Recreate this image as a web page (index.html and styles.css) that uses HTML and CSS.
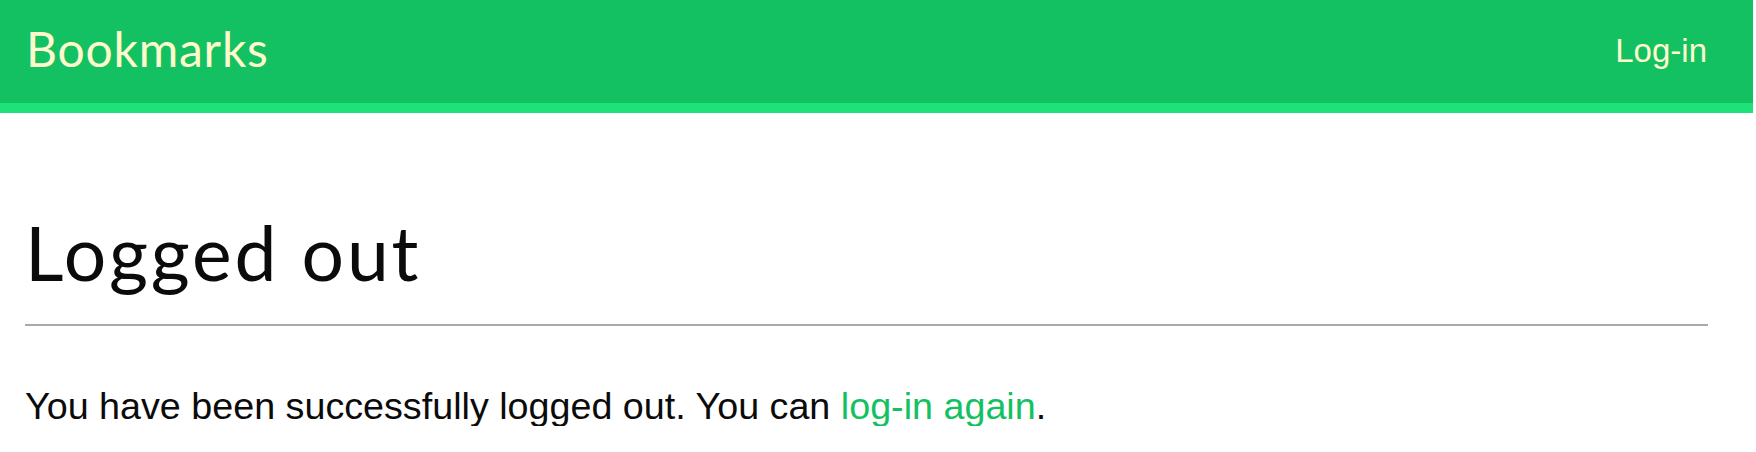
FILE: index.html
```html
<!DOCTYPE html>
<html lang="en">
<head>
<meta charset="utf-8">
<title>Logged out</title>
<link rel="stylesheet" href="styles.css">
</head>
<body>
<header class="site-header">
  <span class="logo">Bookmarks</span>
  <a class="login-link" href="#">Log-in</a>
</header>
<main class="content">
  <h1 class="title">Logged out</h1>
  <hr class="divider">
  <p class="message">You have been successfully logged out. You can <a class="inline-link" href="#">log-in again</a>.</p>
</main>
</body>
</html>
```
FILE: styles.css
```css
html, body {
  margin: 0;
  padding: 0;
  background: #ffffff;
}
body {
  margin-right: 3px;
  font-family: "Liberation Sans", Arial, sans-serif;
  color: #0b0b0b;
}
.site-header {
  height: 103px;
  background: #13c163;
  border-bottom: 10px solid #1de27a;
  display: flex;
  justify-content: space-between;
  align-items: flex-start;
  padding: 0 46px 0 26px;
}
.logo {
  font-family: "Lato", sans-serif;
  font-size: 48px;
  letter-spacing: 0.8px;
  line-height: 1;
  margin-top: 25px;
  color: #fdf9cc;
}
.login-link {
  font-family: "Liberation Sans", Arial, sans-serif;
  font-size: 33px;
  line-height: 1;
  margin-top: 34px;
  color: #fdf9cc;
  text-decoration: none;
}
.content {
  padding: 0 45px 0 25px;
}
.title {
  font-family: "Lato", sans-serif;
  font-weight: normal;
  font-size: 75px;
  letter-spacing: 2.9px;
  line-height: 1;
  margin: 102px 0 0 0;
  color: #0b0b0b;
}
.divider {
  border: 0;
  height: 2px;
  background: #a9a9a9;
  margin: 34px 0 0 0;
}
.message {
  font-size: 37.7px;
  line-height: 1;
  margin: 62px 0 0 0;
}
.inline-link {
  color: #13c163;
  text-decoration: none;
}
```
